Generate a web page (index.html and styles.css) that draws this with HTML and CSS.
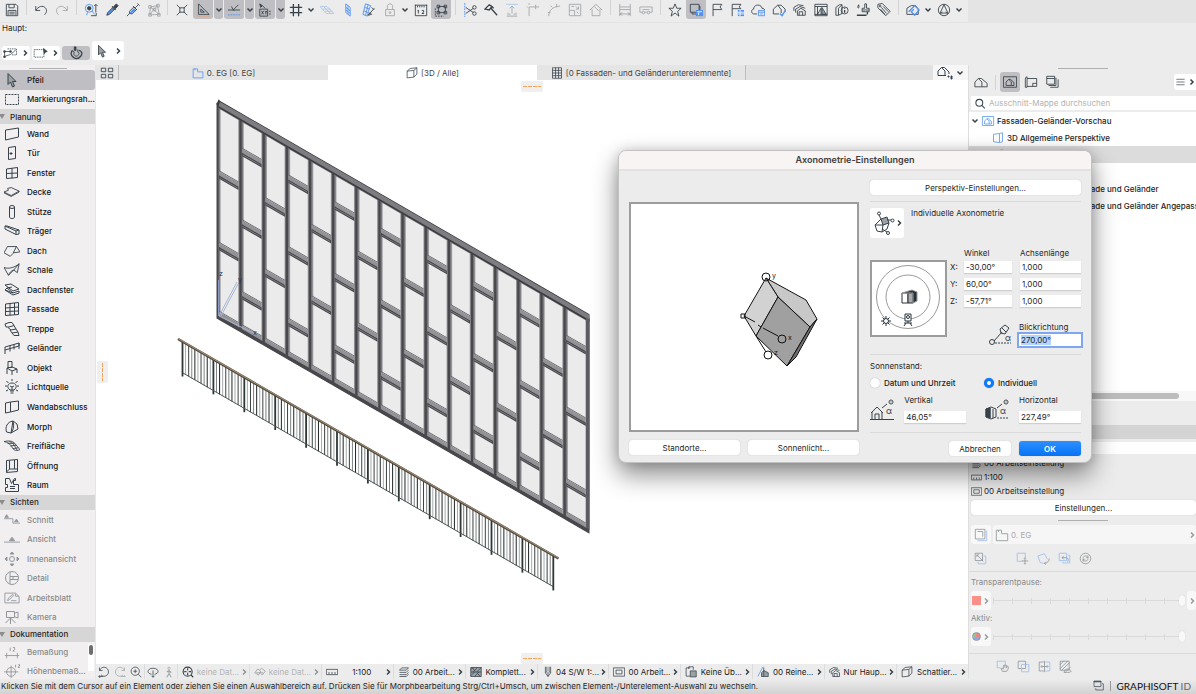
FILE: index.html
```html
<!DOCTYPE html>
<html lang="de">
<head>
  <meta charset="UTF-8" />
  <meta name="viewport" content="width=device-width, initial-scale=1.0"/>
  <title>Axonometrie-Einstellungen</title>
  <link rel="stylesheet" href="styles.css">
</head>
<body>

<!-- icon sprite, all on a 16px grid -->
<svg class="sprite" aria-hidden="true">
  <symbol id="chev" viewBox="0 0 8 8"><path class="bold" d="M1.5 2.5 4 5l2.500-2.500"/></symbol>
  <symbol id="next" viewBox="0 0 8 8"><path class="bold" d="M3 1.500 5.500 4 3 6.500"/></symbol>
  <symbol id="save" viewBox="0 0 16 16"><path d="M1.500 1.500h11l2 2v11h-13zM4.500 1.500v4h6v-4M3.500 14v-5.500h9V14M5 10.500h6M5 12.500h6"/></symbol>
  <symbol id="undo" viewBox="0 0 16 16"><path d="M2 3.500v5h5M2 8.500c3-5 8-6 11-3 2.500 3 1 6-1 8"/></symbol>
  <symbol id="redo" viewBox="0 0 16 16"><path d="M14 3.500v5H9M14 8.500c-3-5-8-6-11-3-2.500 3-1 6 1 8"/></symbol>
  <symbol id="find" viewBox="0 0 16 16"><circle class="blue" cx="6" cy="6" r="4.500"/><circle class="fill" cx="6" cy="6" r="2"/><path class="blue" d="M4 10.500 3 14M9 9l3 4"/><path d="M13.500 2v9M11.500 3.500l2-2 2 2M8 14.500h6v-3"/></symbol>
  <symbol id="pick" viewBox="0 0 16 16"><path class="bluefill" d="M2 14l1-3 5-5 2 2-5 5z"/><path d="M2 14l1-3 5-5 2 2-5 5z"/><path class="fill" d="M10 4l3-3 2 2-3 3.500z"/><path class="bold" d="M8 4l4 4"/></symbol>
  <symbol id="inject" viewBox="0 0 16 16"><path class="bluefill" d="M4 11l5-5 2 2-5 4z"/><path d="M1 15l3-3M4 9.500l5-5 3 3-5 5-3-.5zM10.500 5.500l4-4M13 .5l2.500 2.500M8 3.500l4.500 4.500"/></symbol>
  <symbol id="nodes" viewBox="0 0 16 16"><path d="M3 13.500l1-9 8-1.500 2 10zM4 4.500l10 8.500M12 3L3 13"/><path d="M2 3h3v3H2zM11 1.500h3v3h-3zM2 12h3v3H2zM12 12h3v3h-3zM7 6h3v3H7z"/></symbol>
  <symbol id="snap" viewBox="0 0 16 16"><path d="M2 2l4 4M14 2l-4 4M2 14l4-4M14 14l-4-4M5.500 5.500h5v5h-5z"/></symbol>
  <symbol id="triangle" viewBox="0 0 16 16"><path d="M3 1v12h12zM5.500 7v3.500h4z"/><path class="orange" d="M2 15h13M1.500 1v14"/></symbol>
  <symbol id="guide" viewBox="0 0 16 16"><path d="M1 8h14M7 8l6-6M5 4l3 5"/><path class="blue dash" d="M1 13.500h14"/></symbol>
  <symbol id="xy" viewBox="0 0 16 16"><path class="fill" d="M2 1l3 2-2 2z"/><path d="M2 7h9v8H2zM4 9l2.500 4M6.500 9L4 13M8 9l1 2 1-2M9 11v2M12.500 9.500h2M12.500 12.500h2M5 3l3 3"/></symbol>
  <symbol id="grid" viewBox="0 0 16 16"><path class="bold" d="M5 1v14M11 1v14M1 5h14M1 11h14"/></symbol>
  <symbol id="plane" viewBox="0 0 16 16"><path class="blue" d="M0 4h8l8 8H7zM3 7h9M4 4l8 8M5.500 9.500H14"/></symbol>
  <symbol id="vplane" viewBox="0 0 16 16"><path class="blue" d="M5.500 1l5 4v10l-5-4zM8 3v10M5.500 5l5 4M5.500 8l5 4"/></symbol>
  <symbol id="editplane" viewBox="0 0 16 16"><path class="blue" d="M4 1l6 2-2 4-2 8-5-2zM3 5l6 2M2 9l5 2M7 2L4 14"/><path d="M8 13l6-7M11 5l3 3M7 14l2-3 2 2z"/></symbol>
  <symbol id="lock" viewBox="0 0 16 16"><path d="M3 7.500h10v7H3zM5 7V4c0-4 6-4 6 0v3"/><circle cx="8" cy="11" r="1"/></symbol>
  <symbol id="ruler12" viewBox="0 0 16 16"><path d="M1.500 2v12.500h13V2M1 2.500h14M4 3v2M6.500 3v2M9 3v2M11.500 3v2M5 8v4M4 9l1-1M9 8.500h2v2L9 12h2.500"/></symbol>
  <symbol id="group" viewBox="0 0 16 16"><path d="M5 4h8v7H5z"/><path d="M3.500 2.500h3v3h-3zM11.500 2.500h3v3h-3zM3.500 9.500h3v3h-3zM11.500 9.500h3v3h-3z"/><path class="dash" d="M1.500 6v9H11"/></symbol>
  <symbol id="cut" viewBox="0 0 16 16"><path class="blue dash" d="M2 0v16"/><path d="M3 5l9 6M3 12l9-6"/><circle cx="13" cy="5" r="2"/><circle cx="13" cy="12" r="2"/></symbol>
  <symbol id="axe" viewBox="0 0 16 16"><path class="bold" d="M1 7l5-5 3 2-3 4zM8 6l7 8M8 3l3 3"/></symbol>
  <symbol id="raise" viewBox="0 0 16 16"><path class="blue" d="M1 1.500h14"/><path d="M8 12V4M5.500 6L8 3.500 10.500 6M2 15h12M3.500 14v-3M12.500 14v-3M5.500 14v-2M10.500 14v-2"/></symbol>
  <symbol id="corner" viewBox="0 0 16 16"><path d="M3.500 15V4.500H15M3.500 0v2M1 4.500h1M11 2v5"/></symbol>
  <symbol id="arc" viewBox="0 0 16 16"><path d="M2 15C2 8 7 4 15 3.500M1 11h3M11 1v4M6 5L4 3"/></symbol>
  <symbol id="resize" viewBox="0 0 16 16"><path d="M1.500 1.500h13v13h-13zM1.500 8.500h6v6M4 4h3M9 4l3 3M12 4v3H9M10 10l2 2"/></symbol>
  <symbol id="house" viewBox="0 0 16 16"><path d="M1 8l7-6.500L15 8M3.500 7v7.500h9V7M6 4l5 5"/></symbol>
  <symbol id="dim" viewBox="0 0 16 16"><path d="M2 1v14M14 1v14M2 4.500h12M2 7.500h12M2 12.500h12M5 11l-3 1.500L5 14M11 11l3 1.500L11 14"/></symbol>
  <symbol id="truck" viewBox="0 0 16 16"><path d="M4 10.500H1v-6h14v6h-3M6.500 10.500h3M4 7.500h8"/><circle cx="5" cy="11" r="1.500"/><circle cx="11" cy="11" r="1.500"/></symbol>
  <symbol id="star" viewBox="0 0 16 16"><path d="M8 1l2 5h5l-4 3.500 1.500 5.500L8 11.500 3.500 15 5 9.500 1 6h5z"/></symbol>
  <symbol id="stack" viewBox="0 0 16 16"><path d="M1.500 1.500h10v9h-10zM3.500 10.500v2h9v-9h-1"/><path class="bluefill" d="M8 8h8v7H8z"/><path class="white" d="M9 10h6M11 11v3"/></symbol>
  <symbol id="flag" viewBox="0 0 16 16"><path d="M3.500 15V1.500h10l-2 3 2 3h-10"/></symbol>
  <symbol id="flaglist" viewBox="0 0 16 16"><path d="M2.500 15V1.500h10l-2 3 2 2h-10"/><path class="bluefill" d="M9 8h7v7H9z"/><path class="white" d="M9 10.500h7M9 12.500h7M11.500 8v7"/></symbol>
  <symbol id="cloud" viewBox="0 0 16 16"><path d="M7 12.500H3C0 12 0 7 3 7c0-6 9-6 9.500-1 2 0 3 1 3 2"/><path class="blue" d="M8.500 8.500h7v6h-7zM8.500 10.500h7M10.500 12.500h3"/></symbol>
  <symbol id="housecheck" viewBox="0 0 16 16"><path d="M8 12.500H1.500V7l5-4.500 4 5v4M6.500 2.500h4L15 7v3"/><path class="blue bold" d="M9 12l2.500 2.500L15 9"/></symbol>
  <symbol id="houses" viewBox="0 0 16 16"><path d="M1 9V5l5-3 6 1M3 11V7l5-3 6 2M5 14V9l4-3 5 3v5zM7 14v-4h4v4"/></symbol>
  <symbol id="picture" viewBox="0 0 16 16"><path d="M1 1.500h14v13H1z"/><path class="soft" d="M9 13V5l5 8z"/><path d="M1 4h14M4 13l4-7M8 6v7M4 4v10M1 13h14"/></symbol>
  <symbol id="info" viewBox="0 0 16 16"><path d="M1 14V5l4-3h3v10l-4 2zM4 14V6l4-4"/><circle cx="11" cy="8.500" r="4"/><path class="bold" d="M11 8v3M11 5.500v1"/></symbol>
  <symbol id="brush" viewBox="0 0 16 16"><path d="M3 2c-3 5 2 5 0 0M10 1v5H7v4h8V6h-3V1zM7 8h8"/><path class="bold" d="M1 14h11M13 10v3"/></symbol>
  <symbol id="tag" viewBox="0 0 16 16"><path d="M1 1.500l5-1 9 9-5 5-9-9zM5 5l6 7M7 4l6 6M4 7l5 6"/><circle cx="3.500" cy="3.500" r="1"/></symbol>
  <symbol id="crane" viewBox="0 0 16 16"><path d="M1 6l5-3h5l3 4v6H1z"/><path class="blue bold" d="M3 10l7-7 5 5-5 6-4-4 3-3"/></symbol>
  <symbol id="mark" viewBox="0 0 16 16"><circle cx="8" cy="8" r="6.500"/><path d="M8 2l4.500 9.500h-9zM4 12l2-2M12 12l-2-2"/></symbol>
  <symbol id="arrow" viewBox="0 0 16 16"><path class="soft" d="M4 1.500l8 8H8.500l2 4.500-2 1-2-5-2.500 2.500z"/></symbol>
  <symbol id="marquee" viewBox="0 0 16 16"><path class="dash" d="M1.500 3.500h13v10h-13z"/></symbol>
  <symbol id="polyselect" viewBox="0 0 20 16"><path d="M2 13V6h8M2 12.500l8-2.500 7-6"/><path class="fill" d="M1 5h2v2H1zM1 12h2v2H1zM9 5h2v2H9z"/><path class="dash" d="M6 2.500h12v8h-6"/></symbol>
  <symbol id="marqarrow" viewBox="0 0 20 16"><path class="dash" d="M1.500 3.500h13v10h-13z"/><path class="fill" d="M14 2l5 4-3 1-1 2z"/></symbol>
  <symbol id="magnet" viewBox="0 0 16 16"><path class="bold" d="M4 5c-5 5 3 12 8 8 5-4 2-8-1-8"/><path d="M6 7c-2 3 2 6 4 4 2-1 2-4 0-4M3 5l3 2M10 4v3"/><path class="fill" d="M6 1h2v4H6z"/></symbol>
  <symbol id="wall" viewBox="0 0 16 16"><path d="M1.500 4l13-2v9l-13 3z"/></symbol>
  <symbol id="door" viewBox="0 0 16 16"><path d="M4.500 2.500l7-1v12l-7 1z"/><path class="fill" d="M6 8h2v1H6z"/></symbol>
  <symbol id="window" viewBox="0 0 16 16"><path d="M2.500 4l11-1.500v10l-11 1zM8 3v10.500M2.500 8.500l11-.5"/></symbol>
  <symbol id="slab" viewBox="0 0 18 16"><path d="M0 8l5-2-1-2 4-1 9 4-9 5zM0 8v1l8 4 9-5V7"/></symbol>
  <symbol id="column" viewBox="0 0 16 16"><ellipse cx="8" cy="3" rx="2.500" ry="1.500"/><path d="M5.500 3v10c0 2 5 2 5 0V3"/></symbol>
  <symbol id="beam" viewBox="0 0 16 16"><path d="M1 3v3l11 5.500V8zM1 3h2l12 4v4l-3 .5M12 8l3-1"/></symbol>
  <symbol id="roof" viewBox="0 0 18 16"><path d="M4 3h10l-4 8-3 3-7-4zM14 3l4 6-7 1"/></symbol>
  <symbol id="shell" viewBox="0 0 18 16"><path d="M0 5c4 2 11 1 17-4l-2 10-4-3-6 6zM11 8l6-7M5 14c1-3 3-5 6-6"/></symbol>
  <symbol id="skylight" viewBox="0 0 16 16"><path d="M1 3l6-1 8 5-6 2zM3 6l-2 2 8 5 6-2V9l-6 2-6-5 5-1M1 8l8 3"/></symbol>
  <symbol id="curtain" viewBox="0 0 16 16"><path d="M1.500 3l13-1.500v12l-13 1zM6 2.500v12M10.500 2v12M1.500 7l13-1M1.500 10.500l13-.5"/></symbol>
  <symbol id="stair" viewBox="0 0 16 16"><path d="M1 3l4-1.500h3l2 3-5 1.500-3 0zM4 6.500L7 9l5-1-2-3.500M6 9l2 3 6-1-2-3M8 12l2 2.500h5L14 11"/></symbol>
  <symbol id="rail" viewBox="0 0 16 16"><path d="M1 7l14-4v3M1 7v7M1 10l14-4M6 5.500v6M15 3v6M10 4.500v5"/></symbol>
  <symbol id="chair" viewBox="0 0 16 16"><path d="M4 1.500h4v6H4zM3 8l5-1 5 2-5 2zM3 8v6M8 11v4M13 9v4"/></symbol>
  <symbol id="bulb" viewBox="0 0 16 16"><path d="M6 11c-4-3-2-7 2-7s6 4 2 7zM6 12h4M6.500 14h3M8 0v2M1 7h2M13 7h2M2.500 2l2 2M13.500 2l-2 2M2 12l2-1M14 12l-2-1M6 7l2 1 2-1M8 8v3"/></symbol>
  <symbol id="wallend" viewBox="0 0 16 16"><path d="M1.500 4l5-1v10l-5 1zM6.500 3l8-1v9l-8 2"/></symbol>
  <symbol id="morph" viewBox="0 0 16 16"><path d="M9 2C3 3 1 8 2.500 13L7 14zM9 2l4 3 1 5-7 4M9 2c1 4 1 8-2 12"/></symbol>
  <symbol id="mesh" viewBox="0 0 18 16"><path d="M0 3c5-1 8-1 11 1l7 8c-4 2-6 1-8-1C7 5 4 4 0 3zM6 3c4 1 6 5 9 10M7 8l7-1M10 11l6-1M4 5l8 0"/></symbol>
  <symbol id="opening" viewBox="0 0 16 16"><path d="M2.500 2.500l11-1v12l-11 1zM5.500 2.500v8.500H13M5.500 11l-3 3M10.500 2v9"/></symbol>
  <symbol id="zone" viewBox="0 0 16 16"><path d="M1.500 1.500h4l2 5 3-5h1v2h-2v4h5v7h-13v-4h2v-3h-2zM6 9.500h5M6 11.500h5"/></symbol>
  <symbol id="section" viewBox="0 0 18 16"><path d="M0 6.500h10v5h8"/><path class="fill" d="M1 5l2-3 2 3zM12 10l2-3 2 3z"/></symbol>
  <symbol id="elev" viewBox="0 0 18 16"><path d="M0 11.500h18"/><path class="fill" d="M6 10l3-4 3 4z"/></symbol>
  <symbol id="interior" viewBox="0 0 16 16"><circle cx="8" cy="8" r="2.500"/><path class="fill" d="M8 1l2 2H6zM8 15l2-2H6zM1 8l2-2v4zM15 8l-2-2v4z"/></symbol>
  <symbol id="detail" viewBox="0 0 16 16"><circle cx="8" cy="8" r="6.500"/><path d="M6 2v12M6 6.500h8M6 9.500h8M9 6v4"/></symbol>
  <symbol id="sheet" viewBox="0 0 18 16"><path d="M1 2.500h12l4 4v7H1zM4 11l1-3 5-4 1 1-5 5zM8 11h6M13 3v3h4"/></symbol>
  <symbol id="camera" viewBox="0 0 16 16"><path d="M2.500 2.500h8v6h-8zM11 4l3-1v6l-3-1M6.500 9v6M6.500 9l-5 5M6.500 9l5 5"/></symbol>
  <symbol id="dimension" viewBox="0 0 18 16"><path d="M1 12h16M3 9v6M15 9v6M7 3v4M10 3h2v2l-2 2h2"/></symbol>
  <symbol id="level" viewBox="0 0 18 16"><circle cx="8" cy="9" r="5"/><path d="M0 9h16M8 2v14M13 1v3M16 1h2l-2 3h2"/></symbol>
  <symbol id="tiles" viewBox="0 0 16 16"><path d="M1.500 2.500h5v4h-5zM9.500 2.500h5v4h-5zM1.500 9.500h5v4h-5zM9.500 9.500h5v4h-5z"/></symbol>
  <symbol id="plan" viewBox="0 0 16 16"><path d="M1.500 2.500h6v4h7v8h-13zM4 2.500v2"/></symbol>
  <symbol id="box" viewBox="0 0 16 16"><path d="M1.500 5.500l9-1v9l-9 1zM1.500 5.500l4-3.500 9-1-4 3.500M14.500 1v8.500l-4 4"/></symbol>
  <symbol id="table" viewBox="0 0 16 16"><path d="M2 1h12v14H2zM2 4.500h12M2 8h12M2 11.500h12M6 1v14M10 1v14"/></symbol>
  <symbol id="project" viewBox="0 0 16 16"><path d="M1 13.500V8l4-4 4 4v5.500zM5 4h3.500L15 9.500v4H9"/></symbol>
  <symbol id="projtab" viewBox="0 0 16 16"><path d="M9 10.500H1V6l3.500-3.500L8 6v4.500M4.500 2.500h3L12 7v2"/><path class="fill" d="M11 11h1v1h-1zM14 11h1v3h-1z"/></symbol>
  <symbol id="viewmap" viewBox="0 0 16 16"><path d="M.5 2h15v12H.5z"/><path d="M3.500 12V8l3-3 3 3v4zM6.500 5h2l4 3.500V12h-3"/></symbol>
  <symbol id="layout" viewBox="0 0 16 16"><path d="M3.500 2v12h-2v-9c0-3 2-3 2-3M3.500 4h11v9h-11M10 13V9.500h4.500"/></symbol>
  <symbol id="pub" viewBox="0 0 16 16"><path d="M2 1.500h9v9H2zM4 12h8.500V3M6 14h9V5M2 4h9"/></symbol>
  <symbol id="menu" viewBox="0 0 16 16"><path d="M2 4h12M2 8h12M2 12h12"/></symbol>
  <symbol id="search" viewBox="0 0 16 16"><circle class="bold" cx="7" cy="7" r="5"/><path class="bold" d="M11 11l4 4"/></symbol>
  <symbol id="persp" viewBox="0 0 16 16"><path class="blue" d="M2 3l8-1v12l-8-1zM10 2l4-1v12l-4 1"/></symbol>
  <symbol id="layers" viewBox="0 0 16 16"><path d="M5 2.500h9l-3 3H2zM2 8.500h9l3-3M2 11.500h9l3-3M2 14h9l3-3"/></symbol>
  <symbol id="scale" viewBox="0 0 16 16"><path d="M.5 4.500h15v7H.5zM4 11V8M8 11V8M12 11V8"/></symbol>
  <symbol id="frame" viewBox="0 0 16 16"><path d="M.5 2.500h15v11H.5zM4 5.500h8v5H4z"/></symbol>
  <symbol id="trace" viewBox="0 0 16 16"><path class="blue" d="M4 14.500h10.500V3"/><path d="M1.500 1.500h11v11h-11zM4 4h6v6"/></symbol>
  <symbol id="swap" viewBox="0 0 16 16"><path d="M1.500 1.500h9v9h-9zM3.500 3.500l8 8M3.500 6V3.500H6"/><path class="blue" d="M12 5h2.500v9.500H5V12"/></symbol>
  <symbol id="move" viewBox="0 0 16 16"><path class="blue" d="M8 11.500H1.500v-10h10V7"/><path d="M11 7v8M7 11h8M10 8l1-1 1 1M10 14l1 1 1-1"/></symbol>
  <symbol id="rotate" viewBox="0 0 16 16"><path class="blue" d="M8 14l-4-1-3-8 8-3 4 7"/><path d="M15 8c0 4-3 6-6 6M11 12l-2 2 2 1.500"/></symbol>
  <symbol id="back" viewBox="0 0 16 16"><path class="blue" d="M1.500 1.500h9v9h-9zM12 4h2.500v9.500H6V12"/><path d="M5 7h5c3 0 3 3 2 5M7 5L5 7l2 2"/></symbol>
  <symbol id="refresh" viewBox="0 0 16 16"><circle cx="8" cy="8" r="6.500"/><path d="M5 8c0-4 5-4 6-1M11 8c0 4-5 4-6 1M11 4v3H9M5 12V9h2"/></symbol>
  <symbol id="hand" viewBox="0 0 16 16"><path class="blue" d="M5 9.500H1.500v-8h10V6"/><path d="M6 10l2 4h5l2-3V8l-2-1-2-1-2 1v4zM11 6v4M13 7v3"/></symbol>
  <symbol id="overlap" viewBox="0 0 16 16"><path d="M1.500 1.500h9v9h-9z"/><path class="blue" d="M5.500 5.500h9v9h-9z"/></symbol>
  <symbol id="split" viewBox="0 0 16 16"><path class="blue" d="M9 2.500h5.500v11H9"/><path d="M7 2.500H1.500v11H7M8 1v14M4 8h8M5 6.500L3.500 8 5 9.500M11 6.500L12.500 8 11 9.500"/></symbol>
  <symbol id="hatch" viewBox="0 0 16 16"><path d="M1.500 1.500h11v11h-11zM1 6l5-5M1 11L11 1M3 13L13 3M6 15c2-5 6-5 9-1-3 2-6 2-9 1zM7 16l7-7"/></symbol>
  <symbol id="zoomin" viewBox="0 0 16 16"><circle cx="7" cy="7" r="5.500"/><path d="M7 4.500v5M4.500 7h5M11 11l4 4"/></symbol>
  <symbol id="zoomprev" viewBox="0 0 16 16"><path d="M4 12c5 4 10 0 10-4 0-7-9-9-12-2M2 2v4h4M1 14h6M1 14l2-2M1 14l2 2"/></symbol>
  <symbol id="zoomnext" viewBox="0 0 16 16"><path d="M12 12c-5 4-10 0-10-4 0-7 9-9 12-2M14 2v4h-4M15 14H9M15 14l-2-2"/></symbol>
  <symbol id="orbit" viewBox="0 0 16 16"><path d="M6 11C-1 10 0 3 8 3s9 7 2 8M8 6v9M6 13l2 2 2-2"/></symbol>
  <symbol id="walk" viewBox="0 0 16 16"><circle cx="8" cy="3" r="1.500"/><path class="bold" d="M8 5v5l-3 5M8 10l3 5M5 8l3-2 3 3"/></symbol>
  <symbol id="fit" viewBox="0 0 16 16"><circle class="bold" cx="7.500" cy="7.500" r="6"/><path class="bold" d="M12 12l3 3M7.500 3v3M7.500 9v3M3 7.500h3M9 7.500h3"/></symbol>
  <symbol id="orient" viewBox="0 0 16 16"><path d="M1 9l4-5 4 3-3 5zM8 5l2-2 5 4-4 5-2-2M3 9h9"/></symbol>
  <symbol id="pattern" viewBox="0 0 16 16"><path class="soft" d="M1 2h14v12H1z"/><path d="M1 8h14M1 5l3-3M4 8l6-6M9 8l6-6M1 13l5-5M6 14l6-6M3 2l4 5M9 9l5 5"/></symbol>
  <symbol id="pen" viewBox="0 0 16 16"><path d="M4.500 1v8L8 14l3.500-5V1M8 8v6M4.500 9l2-1.500V1M11.500 9l-2-1.500V1"/></symbol>
  <symbol id="override" viewBox="0 0 16 16"><path d="M7 2.500H1.500v11H7"/><path class="soft" d="M7 6.500h8v8H7z"/><path d="M5 4V1h6v4"/></symbol>
  <symbol id="reno" viewBox="0 0 16 16"><path class="blue" d="M8 1L1 14"/><path class="soft" d="M6 14V9l3-3 6 3v5z"/><path d="M9 2v12"/></symbol>
  <symbol id="two" viewBox="0 0 16 16"><path d="M1.500 1.500h10v8h-10z"/><path class="bold" d="M1 2.500h11"/><path d="M4 12v2.500h11v-9h-2"/></symbol>
  <symbol id="axo" viewBox="0 0 24 24"><path class="soft" d="M10 8l6-2 2 6-6 2z"/><path d="M10 8l-6 6 2 6 5 1 5-3 2-6M12 14l-1 7M4 14l8 0M10 8l-2-4M16 9h4M11 18l5 3"/><circle cx="8" cy="2.500" r="1.500"/><circle cx="21.500" cy="9.500" r="1.500"/><circle cx="17" cy="22" r="1.500"/></symbol>
</svg>

<div class="app">
  <header class="top">
    <div class="toolbar">
      <button><svg><use href="#save"/></svg></button><i class="sep"></i>
      <button><svg><use href="#undo"/></svg></button>
      <button disabled><svg><use href="#redo"/></svg></button><i class="sep"></i>
      <button><svg><use href="#find"/></svg></button>
      <button><svg><use href="#pick"/></svg></button>
      <button><svg><use href="#inject"/></svg></button>
      <button disabled><svg><use href="#nodes"/></svg></button><i class="sep"></i>
      <button><svg><use href="#snap"/></svg></button>
      <button class="on"><svg><use href="#triangle"/></svg></button>
      <button class="drop on"><svg><use href="#chev"/></svg></button>
      <button class="on"><svg><use href="#guide"/></svg></button>
      <button class="drop on"><svg><use href="#chev"/></svg></button>
      <button class="on"><svg><use href="#xy"/></svg></button>
      <button class="drop on"><svg><use href="#chev"/></svg></button>
      <button><svg><use href="#grid"/></svg></button>
      <button class="drop"><svg><use href="#chev"/></svg></button>
      <button disabled><svg><use href="#plane"/></svg></button>
      <button><svg><use href="#vplane"/></svg></button>
      <button><svg><use href="#editplane"/></svg></button>
      <button disabled><svg><use href="#lock"/></svg></button>
      <button class="drop"><svg><use href="#chev"/></svg></button>
      <button><svg><use href="#ruler12"/></svg></button>
      <button class="on"><svg><use href="#group"/></svg></button><i class="sep"></i>
      <button><svg><use href="#cut"/></svg></button>
      <button><svg><use href="#axe"/></svg></button>
      <button disabled><svg><use href="#raise"/></svg></button>
      <button disabled><svg><use href="#corner"/></svg></button>
      <button disabled><svg><use href="#arc"/></svg></button>
      <button disabled><svg><use href="#resize"/></svg></button>
      <button disabled><svg><use href="#house"/></svg></button><i class="sep"></i>
      <button disabled><svg><use href="#dim"/></svg></button>
      <button disabled><svg><use href="#truck"/></svg></button><i class="sep"></i>
      <button><svg><use href="#star"/></svg></button>
      <button class="on"><svg><use href="#stack"/></svg></button>
      <button><svg><use href="#flag"/></svg></button>
      <button><svg><use href="#flaglist"/></svg></button>
      <button><svg><use href="#cloud"/></svg></button>
      <button><svg><use href="#housecheck"/></svg></button>
      <button><svg><use href="#houses"/></svg></button>
      <button><svg><use href="#picture"/></svg></button>
      <button><svg><use href="#info"/></svg></button>
      <button><svg><use href="#brush"/></svg></button>
      <button><svg><use href="#tag"/></svg></button><i class="sep"></i>
      <button><svg><use href="#crane"/></svg></button>
      <button class="drop"><svg><use href="#chev"/></svg></button>
      <button><svg><use href="#mark"/></svg></button>
      <button class="drop"><svg><use href="#chev"/></svg></button>
    </div>
    <div class="top-rest"></div>
  </header>

  <div class="infobox">
    <div>Haupt:</div>
    <div class="infobox-row">
      <button class="pill"><svg class="wide"><use href="#polyselect"/></svg><svg class="tiny"><use href="#next"/></svg></button>
      <button class="pill"><svg class="wide"><use href="#marqarrow"/></svg><svg class="tiny"><use href="#next"/></svg></button>
      <button class="pill on"><svg><use href="#magnet"/></svg></button>
      <button class="pill tall"><svg><use href="#arrow"/></svg><svg class="tiny"><use href="#next"/></svg></button>
    </div>
  </div>

  <div class="main">
    <nav class="toolbox">
      <div class="grip"></div>
      <button class="on"><svg><use href="#arrow"/></svg>Pfeil</button>
      <button><svg><use href="#marquee"/></svg>Markierungsrah...</button>
      <h3>Planung</h3>
      <button><svg><use href="#wall"/></svg>Wand</button>
      <button><svg><use href="#door"/></svg>Tür</button>
      <button><svg><use href="#window"/></svg>Fenster</button>
      <button><svg><use href="#slab"/></svg>Decke</button>
      <button><svg><use href="#column"/></svg>Stütze</button>
      <button><svg><use href="#beam"/></svg>Träger</button>
      <button><svg><use href="#roof"/></svg>Dach</button>
      <button><svg><use href="#shell"/></svg>Schale</button>
      <button><svg><use href="#skylight"/></svg>Dachfenster</button>
      <button><svg><use href="#curtain"/></svg>Fassade</button>
      <button><svg><use href="#stair"/></svg>Treppe</button>
      <button><svg><use href="#rail"/></svg>Geländer</button>
      <button><svg><use href="#chair"/></svg>Objekt</button>
      <button><svg><use href="#bulb"/></svg>Lichtquelle</button>
      <button><svg><use href="#wallend"/></svg>Wandabschluss</button>
      <button><svg><use href="#morph"/></svg>Morph</button>
      <button><svg><use href="#mesh"/></svg>Freifläche</button>
      <button><svg><use href="#opening"/></svg>Öffnung</button>
      <button><svg><use href="#zone"/></svg>Raum</button>
      <h3>Sichten</h3>
      <button disabled><svg><use href="#section"/></svg>Schnitt</button>
      <button disabled><svg><use href="#elev"/></svg>Ansicht</button>
      <button disabled><svg><use href="#interior"/></svg>Innenansicht</button>
      <button disabled><svg><use href="#detail"/></svg>Detail</button>
      <button disabled><svg><use href="#sheet"/></svg>Arbeitsblatt</button>
      <button disabled><svg><use href="#camera"/></svg>Kamera</button>
      <h3>Dokumentation</h3>
      <button disabled><svg><use href="#dimension"/></svg>Bemaßung</button>
      <button disabled><svg><use href="#level"/></svg>Höhenbemaß...</button>
      <div class="toolbox-scroll"></div>
    </nav>

    <section class="work">
      <div class="tabs">
        <button class="overview"><svg><use href="#tiles"/></svg></button>
        <button class="tab"><svg class="blueicon"><use href="#plan"/></svg>0. EG [0. EG]</button>
        <button class="tab active"><svg><use href="#box"/></svg>[3D / Alle]</button>
        <button class="tab last"><svg><use href="#table"/></svg>[0 Fassaden- und Geländerunterelemnente]</button>
        <div class="tabs-fill"></div>
        <button class="tabs-more"><svg><use href="#projtab"/></svg><svg class="tiny"><use href="#chev"/></svg></button>
      </div>
      <div class="canvas">
        <svg class="model" id="model" width="872" height="585" viewBox="96 80 872 585"></svg>
        <div class="handle handle-top"></div>
        <div class="handle handle-left"></div>
        <div class="handle handle-bottom"></div>
      </div>
      <div class="quick">
        <div class="quick-nav">
          <button><svg><use href="#zoomprev"/></svg></button>
          <button disabled><svg><use href="#zoomnext"/></svg></button>
          <button><svg><use href="#zoomin"/></svg></button>
        </div>
        <div class="quick-nav">
          <button><svg><use href="#orbit"/></svg></button>
          <button disabled><svg><use href="#walk"/></svg></button>
        </div>
        <button class="option off"><svg class="dark"><use href="#fit"/></svg><span>keine Dat...</span><svg class="tiny"><use href="#next"/></svg></button>
        <button class="option off"><svg><use href="#orient"/></svg><span>keine Dat...</span><svg class="tiny"><use href="#next"/></svg></button>
        <button class="option"><svg><use href="#scale"/></svg><span>1:100</span><svg class="tiny"><use href="#next"/></svg></button>
        <button class="option"><svg><use href="#layers"/></svg><span>00 Arbeit...</span><svg class="tiny"><use href="#next"/></svg></button>
        <button class="option"><svg><use href="#pattern"/></svg><span>Komplett...</span><svg class="tiny"><use href="#next"/></svg></button>
        <button class="option"><svg><use href="#pen"/></svg><span>04 S/W 1:...</span><svg class="tiny"><use href="#next"/></svg></button>
        <button class="option"><svg><use href="#frame"/></svg><span>00 Arbeit...</span><svg class="tiny"><use href="#next"/></svg></button>
        <button class="option"><svg><use href="#override"/></svg><span>Keine Üb...</span><svg class="tiny"><use href="#next"/></svg></button>
        <button class="option"><svg><use href="#reno"/></svg><span>00 Reine...</span><svg class="tiny"><use href="#next"/></svg></button>
        <button class="option"><svg><use href="#houses"/></svg><span>Nur Haup...</span><svg class="tiny"><use href="#next"/></svg></button>
        <button class="option"><svg><use href="#box"/></svg><span>Schattier...</span><svg class="tiny"><use href="#next"/></svg></button>
      </div>
    </section>

    <aside class="navigator">
      <div class="grip wide-grip"></div>
      <div class="nav-icons">
        <button><svg><use href="#project"/></svg></button><i class="sep"></i>
        <button class="on"><svg><use href="#viewmap"/></svg></button>
        <button><svg><use href="#layout"/></svg></button>
        <button><svg><use href="#pub"/></svg></button>
        <button class="nav-menu"><svg><use href="#menu"/></svg><svg class="tiny"><use href="#next"/></svg></button>
      </div>
      <label class="search"><svg><use href="#search"/></svg><input type="text" placeholder="Ausschnitt-Mappe durchsuchen" aria-label="Ausschnitt-Mappe durchsuchen"></label>
      <ul class="tree">
        <li><svg class="tiny"><use href="#chev"/></svg><svg class="blueicon"><use href="#viewmap"/></svg>Fassaden-Geländer-Vorschau</li>
        <li class="child"><svg><use href="#persp"/></svg>3D Allgemeine Perspektive</li>
        <li class="child selected"><svg><use href="#persp"/></svg></li>
        <li></li>
        <li class="deep">Fassade und Geländer</li>
        <li class="deep">Fassade und Geländer Angepasst</li>
      </ul>
      <div class="hscroll"><div></div></div>
      <div class="props">
        <h4></h4>
        <div class="props-name"></div>
        <p><svg><use href="#layers"/></svg>00 Arbeitseinstellung</p>
        <p><svg><use href="#scale"/></svg>1:100</p>
        <p><svg><use href="#frame"/></svg>00 Arbeitseinstellung</p>
        <button class="push">Einstellungen...</button>
      </div>
      <div class="grip wide-grip"></div>
      <div class="trace">
        <div class="trace-row">
          <button class="chip"><svg><use href="#trace"/></svg></button>
          <button class="trace-ref"><svg><use href="#plan"/></svg><span>0. EG</span><svg class="tiny"><use href="#next"/></svg></button>
        </div>
        <div class="trace-icons">
          <svg class="first"><use href="#swap"/></svg>
          <svg><use href="#move"/></svg>
          <svg><use href="#rotate"/></svg>
          <svg><use href="#back"/></svg>
          <svg><use href="#refresh"/></svg>
        </div>
        <label for="ref">Transparentpause:</label>
        <div class="trace-row">
          <button class="chip"><span class="swatch"></span><svg class="tiny"><use href="#next"/></svg></button>
          <input type="range" id="ref" value="100" disabled>
          <button class="chip narrow"><svg class="tiny"><use href="#next"/></svg></button>
        </div>
        <label for="act">Aktiv:</label>
        <div class="trace-row">
          <button class="chip"><span class="swatch wheel"></span><svg class="tiny"><use href="#next"/></svg></button>
          <input type="range" id="act" value="100" disabled>
          <div class="narrow"></div>
        </div>
        <div class="trace-icons lower">
          <svg><use href="#hand"/></svg>
          <svg><use href="#overlap"/></svg>
          <svg><use href="#split"/></svg>
          <svg><use href="#hatch"/></svg>
        </div>
      </div>
    </aside>
  </div>

  <footer class="status">
    <span>Klicken Sie mit dem Cursor auf ein Element oder ziehen Sie einen Auswahlbereich auf. Drücken Sie für Morphbearbeitung Strg/Ctrl+Umsch, um zwischen Element-/Unterelement-Auswahl zu wechseln.</span>
    <div class="brand"><svg><use href="#two"/></svg><i class="sep"></i><div><b>GRAPHISOFT</b> ID</div></div>
  </footer>
</div>

<form class="dialog" role="dialog" aria-labelledby="dlgTitle" onsubmit="return false">
  <h2 id="dlgTitle">Axonometrie-Einstellungen</h2>
  <div class="dialog-body">
    <div class="dialog-left">
      <svg class="preview" viewBox="0 0 226 226">
        <g transform="translate(-2 -2)">
          <path d="M137 76l40 22 11 19-7 8-32-30z" fill="#c8c8c8"/>
          <path d="M137 76l12 19-22 39-12-20z" fill="#d2d2d2"/>
          <path d="M149 95l32 30-23 39-31-30z" fill="#a0a0a0"/>
          <path d="M181 125l7-8-21 38-9 9z" fill="#707070"/>
          <path d="M115 114l11 6M129 123l3 2M134 126l15 8M127 134l10 16" fill="none"/>
          <circle cx="137" cy="75" r="4" fill="none"/>
          <circle cx="153" cy="137" r="4" fill="none"/>
          <circle cx="139" cy="153" r="4" fill="none"/>
          <path d="M112 112h4v4h-4z" fill="none"/>
          <text x="143" y="76">y</text><text x="159" y="138">x</text><text x="145" y="153">z</text>
        </g>
      </svg>
      <div class="pair">
        <button class="push">Standorte...</button>
        <button class="push">Sonnenlicht...</button>
      </div>
    </div>

    <div class="dialog-right">
      <button class="push">Perspektiv-Einstellungen...</button>
      <hr>
      <div class="axo-type">
        <button class="axo-btn"><svg><use href="#axo"/></svg><svg class="tiny"><use href="#next"/></svg></button>
        <span>Individuelle Axonometrie</span>
      </div>
      <div class="axo-grid">
        <svg class="compass" viewBox="0 0 73 73">
          <circle cx="36" cy="35" r="31.500"/><circle cx="36" cy="35" r="22"/>
          <path d="M30 31h6v10h-6z" fill="#fff" stroke="#26323a"/><path d="M36 31h5v10h-5z" fill="#aaa" stroke="#26323a"/>
          <path d="M41 31l-11 0 10-3 5 2v9l-4 2z" fill="#26323a"/>
          <g stroke="#26323a"><circle cx="14" cy="59" r="2.500" fill="#fff"/><path d="M14 54v2M14 62v2M9 59h2M17 59h2M10.500 55.500l2 2M17.500 55.500l-2 2M10.500 62.500l2-2M17.500 62.500l-2-2"/>
          <path d="M33 52h6v7h-6z" fill="#fff"/><circle cx="36" cy="55" r="1.500"/><path d="M32 61h8M34 61l-2 3M38 61l2 3M36 59v2"/></g>
        </svg>
        <table class="angles">
          <thead><tr><th></th><th>Winkel</th><th>Achsenlänge</th></tr></thead>
          <tbody>
            <tr><th>X:</th><td><input aria-label="Winkel X" value="-30,00°"></td><td><input aria-label="Achsenlänge X" value="1,000"></td></tr>
            <tr><th>Y:</th><td><input aria-label="Winkel Y" value="60,00°"></td><td><input aria-label="Achsenlänge Y" value="1,000"></td></tr>
            <tr><th>Z:</th><td><input aria-label="Winkel Z" value="-57,71°"></td><td><input aria-label="Achsenlänge Z" value="1,000"></td></tr>
          </tbody>
        </table>
      </div>
      <div class="field-row view-dir">
        <svg class="angle-icon" viewBox="0 0 24 22"><path d="M5 17l8-9"/><circle cx="3" cy="18" r="2.500"/><path d="M11 5l5-4 4 3-4 6-4-1zM13 4l4 4"/><path class="dash" d="M6 19h16"/><text x="16" y="17">α</text></svg>
        <div class="field"><label for="dir">Blickrichtung</label><input id="dir" value="270,00°"></div>
      </div>
      <hr>
      <p class="sun-label">Sonnenstand:</p>
      <div class="radios">
        <label><input type="radio" name="sun">Datum und Uhrzeit</label>
        <label><input type="radio" name="sun" checked>Individuell</label>
      </div>
      <div class="sun-fields">
        <svg class="angle-icon" viewBox="0 0 24 22"><path d="M0 20.500h24M2 20v-7l5-5 5 5v7M1 14l6-6 6 6M5 20v-5h4v5M12 9l5-4"/><g class="thin"><circle cx="21" cy="3" r="1.500"/><path d="M21 0v1M21 5v1M18 3h1M23 3h1M19 1l1 1M23 1l-1 1M19 5l1-1M23 5l-1-1"/></g><text x="16" y="15">α</text></svg>
        <div class="field"><label for="vert">Vertikal</label><input id="vert" value="46,05°"></div>
        <svg class="angle-icon" viewBox="0 0 24 22"><path class="fill" d="M1 10l4-1v10l-4-1z"/><path d="M1 10l5-2 5 2v8l-5 2-5-2zM5 9v10M8 10v9M12 9l5-4"/><g class="thin"><circle cx="21" cy="3" r="1.500"/><path d="M21 0v1M21 5v1M18 3h1M23 3h1M19 1l1 1M23 1l-1 1M19 5l1-1M23 5l-1-1"/></g><path class="dash" d="M12 19h12"/><text x="15" y="15">α</text></svg>
        <div class="field"><label for="horiz">Horizontal</label><input id="horiz" value="227,49°"></div>
      </div>
      <hr>
      <div class="dialog-actions">
        <button class="push">Abbrechen</button>
        <button class="push primary">OK</button>
      </div>
    </div>
  </div>
</form>

<script src="script.js"></script>
</body>
</html>
```
FILE: styles.css
```css
:root {
  --chrome: #ececec;
  --tools: #f1eff0;
  --pressed: #bfbfc3;
  --line: #dadada;
  --ink: #37424a;
  --text: #262626;
  --blue: #4f90f0;
}

* {
  box-sizing: border-box;
}

body {
  margin: 0;
  font-family: Inter, "Liberation Sans", sans-serif;
  font-size: 8px;
  line-height: 10px;
  color: var(--text);
  background: var(--chrome);
  overflow: hidden;
}

button, input {
  font: inherit;
  color: inherit;
  border: 0;
  padding: 0;
  margin: 0;
  background: none;
}

button {
  display: flex;
  align-items: center;
  justify-content: center;
  white-space: nowrap;
}

h2, h3, h4, p, ul {
  margin: 0;
  padding: 0;
  font-size: 8px;
}

svg {
  width: 14px;
  height: 14px;
  flex: none;
  display: block;
  fill: none;
  stroke: var(--ink);
  stroke-width: 1;
}

svg.tiny {
  width: 8px;
  height: 8px;
}

.sprite {
  position: absolute;
  width: 0;
  height: 0;
}

.bold { stroke-width: 1.5; }
.thin { stroke-width: 0.7; }
.fill { fill: var(--ink); }
.soft { fill: #9aa0a4; }
.blue { stroke: var(--blue); }
.bluefill { stroke: none; fill: var(--blue); }
.orange { stroke: #f09a5c; stroke-dasharray: 2 1; }
.white { stroke: #fff; }
.dash { stroke-dasharray: 2 1; }
.blueicon { stroke: var(--blue); }

.sep {
  width: 7px;
  height: 15px;
  border-left: 1px solid #d4d4d4;
  margin-left: 3px;
  margin-right: -3px;
}

.grip {
  width: 38px;
  height: 1px;
  margin: 3px auto 1px;
  background: #b0b0b0;
  flex: none;
}

.wide-grip {
  width: 50px;
}

.app {
  display: flex;
  flex-direction: column;
  height: 100vh;
}

/* toolbar */
.top {
  display: flex;
  border-bottom: 1px solid #e4e4e4;
}

.toolbar {
  flex: 1;
  display: flex;
  justify-content: space-between;
  padding: 0 4px 3px 2px;
}

.toolbar button {
  width: 20px;
  height: 19px;
  border-radius: 0 0 3px 3px;
}

.toolbar .drop {
  width: 9px;
}

.toolbar .drop svg {
  width: 8px;
  height: 8px;
}

.toolbar .on,
.nav-icons .on,
.infobox .on {
  background: var(--pressed);
}

.toolbar button:disabled,
.quick button:disabled {
  opacity: 0.4;
}

.top-rest {
  width: 228px;
  background: #e4e4e4;
}

.infobox {
  padding: 0 2px 5px;
}

.infobox-row {
  display: flex;
  align-items: flex-end;
  gap: 2px;
  margin-top: 8px;
}

.pill {
  width: 28px;
  height: 14px;
  gap: 3px;
  border-radius: 3px;
  background: #fff;
}

.pill svg.wide {
  width: 15px;
  height: 12px;
}

.pill.tall {
  width: 32px;
  height: 19px;
  gap: 5px;
}

.main {
  flex: 1;
  min-height: 0;
  display: flex;
}

/* toolbox */
.toolbox {
  position: relative;
  width: 96px;
  flex: none;
  display: flex;
  flex-direction: column;
  margin-bottom: -2px;
  background: var(--tools);
  border-right: 1px solid #e6e6e6;
  overflow: hidden;
}

.toolbox button {
  flex: 1;
  min-height: 0;
  justify-content: flex-start;
  gap: 7px;
  padding-left: 4px;
  font-weight: 500;
  color: #161616;
}

.toolbox button svg {
  width: 16px;
  height: 16px;
}

.toolbox .on {
  background: var(--pressed);
  border-radius: 0 3px 3px 0;
}

.toolbox button:disabled {
  color: #8a8a8a;
}

.toolbox button:disabled svg {
  opacity: 0.5;
}

.toolbox h3 {
  height: 15px;
  flex: none;
  display: flex;
  align-items: center;
  gap: 5px;
  background: #d6d6d6;
  font-weight: 500;
}

.toolbox h3::before {
  content: "";
  border: 3px solid transparent;
  border-top: 5px solid #8c8c8c;
  border-bottom: 0;
  margin-left: -1px;
}

.toolbox-scroll {
  position: absolute;
  right: 1px;
  bottom: 10px;
  width: 6px;
  height: 27px;
  background: #fff;
}

.toolbox-scroll::before {
  content: "";
  display: block;
  width: 4px;
  height: 10px;
  margin: 1px;
  border-radius: 2px;
  background: #6e6e6e;
}

/* 3D window */
.work {
  flex: 1;
  min-width: 0;
  display: flex;
  flex-direction: column;
}

.tabs {
  display: flex;
  height: 15px;
  background: #e5e5e5;
}

.overview {
  width: 23px;
  border-right: 1px solid #bdbdbd;
}

.tab {
  flex: 0 1 209px;
  gap: 3px;
  color: #444;
}

.tab.active {
  background: #fff;
}

.tab.last {
  border-right: 1px solid #bdbdbd;
}

.tab svg {
  width: 12px;
  height: 12px;
}

.tabs-fill {
  flex: 1;
  background: #e1e1e1;
}

.tabs-more {
  width: 35px;
  gap: 3px;
  background: #f6f6f6;
}

.tabs-more svg:first-child {
  width: 16px;
  height: 16px;
}

.canvas {
  position: relative;
  flex: 1;
  min-height: 0;
  background: #fff;
  overflow: hidden;
}

.model {
  width: 872px;
  height: 585px;
  stroke: none;
}

.model text {
  font-size: 7px;
  fill: #20304e;
  stroke: none;
}

.handle {
  position: absolute;
  width: 22px;
  height: 11px;
  left: calc(50% - 11px);
  padding: 5px 2px;
  border-radius: 2px;
  background: #efefef;
}

.handle::before {
  content: "";
  display: block;
  height: 1px;
  background: repeating-linear-gradient(90deg, #f2a45e 0 4px, transparent 4px 5px);
}

.handle-top { top: 1px; }
.handle-bottom { bottom: 0; }

.handle-left {
  left: 1px;
  top: calc(50% - 11px);
  width: 11px;
  height: 22px;
  padding: 2px 5px;
}

.handle-left::before {
  width: 1px;
  height: 18px;
  background: repeating-linear-gradient(#f2a45e 0 4px, transparent 4px 5px);
}

/* quick options */
.quick {
  display: flex;
  height: 15px;
  color: #222;
}

.quick-nav {
  display: flex;
  align-items: center;
  border-right: 1px solid #dcdcdc;
}

.quick-nav button {
  width: 16px;
}

.quick svg {
  width: 12px;
  height: 12px;
}

.quick svg.tiny {
  width: 8px;
  height: 8px;
}

.option {
  flex: 1;
  min-width: 0;
  padding: 0 1px 0 4px;
  border-right: 1px solid #dcdcdc;
}

.option:last-child {
  border-right: 0;
}

.option span {
  flex: 1;
  padding-left: 2px;
  text-align: center;
}

.option.off {
  color: #b4b4b4;
}

.option.off svg:not(.dark) {
  opacity: 0.5;
}

/* navigator */
.navigator {
  width: 228px;
  flex: none;
  display: flex;
  flex-direction: column;
  border-left: 1px solid #dedede;
  overflow: hidden;
}

.nav-icons {
  display: flex;
  align-items: center;
  gap: 1px;
  height: 22px;
  margin-top: 1px;
  padding-left: 2px;
}

.nav-icons button {
  width: 20px;
  height: 20px;
  border-radius: 3px;
}

.nav-icons .nav-menu {
  width: 24px;
  height: 16px;
  margin-left: auto;
  margin-right: -2px;
  background: #fff;
}

.nav-menu svg {
  width: 11px;
}

.search {
  display: flex;
  align-items: center;
  gap: 3px;
  height: 14px;
  margin: 3px 0 2px 2px;
  padding-left: 3px;
  background: #fff;
}

.search svg {
  width: 12px;
  height: 11px;
}

.search input {
  flex: 1;
  min-width: 0;
  outline: 0;
}

.search input::placeholder {
  color: #b2b2b2;
  opacity: 1;
}

.tree {
  flex: 1;
  min-height: 0;
  list-style: none;
  background: #fff;
  font-weight: 500;
}

.tree li {
  display: flex;
  align-items: center;
  gap: 2px;
  height: 17px;
  padding-left: 2px;
  white-space: nowrap;
}

.tree svg {
  width: 14px;
  height: 12px;
}

.tree svg.tiny {
  width: 8px;
}

.tree .child {
  padding-left: 22px;
}

.tree .selected {
  background: #dcdcdc;
}

.tree .deep {
  padding-left: 104px;
}

.hscroll {
  height: 10px;
  padding: 2px 17px 2px 0;
  background: #f8f8f8;
}

.hscroll div {
  height: 6px;
  border-radius: 3px;
  background: #bdbdbd;
}

.props {
  padding: 24px 0 0 2px;
}

.props h4 {
  height: 14px;
  margin-left: -2px;
  background: #d4d4d4;
}

.props-name {
  height: 12px;
  margin: 3px 0 2px;
  background: #fff;
}

.props p {
  display: flex;
  align-items: center;
  gap: 2px;
  height: 14px;
}

.props p svg {
  width: 11px;
  height: 11px;
}

.push {
  height: 15px;
  border-radius: 3px;
  background: #fff;
  box-shadow: 0 0 1px rgba(0, 0, 0, 0.3);
}

.props .push {
  width: 100%;
  margin: 2px 0;
}

.trace {
  padding: 3px 0 0 2px;
  color: #8a8a8a;
}

.trace svg {
  opacity: 0.5;
}

.trace label {
  display: block;
  padding-top: 1px;
  margin-bottom: 4px;
}

.trace-row {
  display: flex;
  align-items: center;
  gap: 2px;
  height: 19px;
  margin: 0 0 2px;
}

.chip {
  width: 20px;
  height: 19px;
  gap: 1px;
  flex: none;
  border-radius: 3px;
  background: #f8f8f8;
}

.trace-row .narrow {
  width: 9px;
  flex: none;
}

.trace-ref {
  flex: 1;
  height: 19px;
  padding-left: 2px;
  gap: 2px;
  border-radius: 3px;
  background: #f6f6f6;
  color: #ababab;
}

.trace-ref span {
  flex: 1;
  text-align: left;
}

.trace-icons {
  display: flex;
  gap: 8px;
  height: 26px;
  align-items: center;
  padding-left: 2px;
  margin-left: -2px;
  border-bottom: 1px solid var(--line);
  margin-bottom: 4px;
}

.trace-icons svg {
  width: 13px;
  height: 13px;
}

.trace-icons .first {
  margin: 0 21px 0 3px;
}

.trace-icons.lower {
  margin-top: 7px;
  margin-bottom: 0;
  padding-left: 27px;
  border-top: 1px solid var(--line);
  border-bottom: 0;
}

.swatch {
  width: 9px;
  height: 9px;
  background: #fb9088;
}

.swatch.wheel {
  border-radius: 50%;
  border: 1px solid #999;
  background: conic-gradient(#e88a84 0 33%, #8fa8e8 33% 66%, #8cc79a 66%);
}

.trace input[type=range] {
  appearance: none;
  flex: 1;
  min-width: 0;
  height: 11px;
  background:
    linear-gradient(#dadada, #dadada) 0 5px / 100% 1px no-repeat,
    repeating-linear-gradient(90deg, #dadada 0 1px, transparent 1px 19px) 0 3px / 100% 6px no-repeat;
  padding: 0;
}

.trace input[type=range]::-webkit-slider-thumb {
  appearance: none;
  width: 6px;
  height: 11px;
  border-radius: 3px;
  background: #f8f8f8;
  box-shadow: 0 0 1px rgba(0, 0, 0, 0.2);
}

/* status line */
.status {
  position: relative;
  display: flex;
  align-items: center;
  justify-content: space-between;
  height: 15px;
  padding: 0 5px 2px 1px;
  background: linear-gradient(#ececec, #d2d2d2);
  white-space: nowrap;
}

.brand {
  display: flex;
  align-items: center;
  gap: 3px;
  font-family: Lato, sans-serif;
  font-size: 10px;
  color: #666;
}

.brand b {
  font-weight: 400;
  color: #111;
}

.brand svg {
  width: 11px;
  height: 11px;
}

.brand .sep {
  height: 10px;
  border-color: #999;
}

/* dialog */
.dialog {
  position: absolute;
  top: 150px;
  right: 104px;
  width: 474px;
  border: 1px solid #c2c2c2;
  border-radius: 8px;
  background: var(--chrome);
  box-shadow: 0 12px 26px rgba(0, 0, 0, 0.45), 0 0 12px rgba(0, 0, 0, 0.15);
  overflow: hidden;
}

.dialog h2 {
  height: 20px;
  border-bottom: 2px solid #e4e2e1;
  background: #f7f4f3;
  font-size: 9px;
  font-weight: 600;
  line-height: 18px;
  text-align: center;
  color: #404040;
}

.dialog-body {
  display: flex;
  gap: 11px;
  padding: 9px 10px 6px;
}

.dialog-left {
  width: 230px;
  display: flex;
  flex-direction: column;
  justify-content: flex-end;
  padding-bottom: 1px;
}

.preview {
  width: 230px;
  height: 230px;
  border: 2px solid #9c9c9c;
  background: #fff;
  stroke: #111;
}

.preview text {
  font-size: 7px;
  fill: #111;
  stroke: none;
}

.pair {
  display: flex;
  gap: 8px;
  margin-top: 8px;
}

.pair .push {
  flex: 1;
}

.dialog-right {
  flex: 1;
  min-width: 0;
}

.dialog-right > .push {
  width: 100%;
}

.dialog hr {
  border: 0;
  border-top: 1px solid var(--line);
  margin: 6px 0;
}

.axo-type {
  display: flex;
  gap: 7px;
  line-height: 10px;
}

.axo-btn {
  width: 34px;
  height: 30px;
  border-radius: 3px;
  background: #fff;
}

.axo-btn svg:first-child {
  width: 24px;
  height: 26px;
}

.axo-grid {
  display: flex;
  gap: 3px;
  margin-top: 10px;
  align-items: flex-end;
}

.compass {
  width: 77px;
  height: 77px;
  border: 2px solid #9c9c9c;
  background: #fff;
  stroke: #9a9a9a;
}

.angles {
  flex: 1;
  border-collapse: collapse;
  margin-bottom: 28px;
  table-layout: fixed;
}

.angles th {
  padding: 0;
  text-align: left;
  font-weight: 400;
  height: 10px;
}

.angles tbody th {
  height: 17px;
}

.angles th:first-child {
  width: 14px;
}

.angles th:nth-child(2) {
  width: 56px;
}

.angles td {
  padding: 0;
}

.angles td:nth-child(2) {
  padding-right: 8px;
}

.dialog input:not([type=radio]) {
  display: block;
  width: 100%;
  height: 12px;
  padding: 0 2px;
  background: #fff;
  box-shadow: 0 1px 1px rgba(0, 0, 0, 0.12);
}

.field-row,
.sun-fields {
  display: flex;
  justify-content: flex-end;
  align-items: flex-end;
}

.view-dir {
  margin-top: -15px;
  margin-bottom: 8px;
}

.field {
  width: 62px;
}

.field label {
  display: block;
  margin-bottom: 2px;
}

.angle-icon {
  width: 24px;
  height: 22px;
  margin-right: 6px;
}

.sun-fields {
  justify-content: space-between;
  margin-bottom: 9px;
}

.sun-fields .angle-icon {
  margin: 0 0 2px;
}

.sun-fields .field:nth-child(2) {
  margin-right: 8px;
}

.sun-fields label {
  margin-bottom: 6px;
}

.angle-icon text {
  font-size: 9px;
  fill: var(--ink);
  stroke: none;
}

#dir {
  outline: 2px solid #7fa6f0;
  caret-color: transparent;
}

#dir::selection {
  background: #b3d5fd;
  color: var(--text);
}

.radios {
  display: grid;
  grid-template-columns: 114px 1fr;
  margin: 7px 0;
}

.radios label {
  display: flex;
  align-items: center;
  gap: 4px;
  font-weight: 500;
}

.radios input {
  appearance: none;
  width: 10px;
  height: 10px;
  border-radius: 50%;
  background: #fff;
  box-shadow: 0 0 1px rgba(0, 0, 0, 0.4);
}

.radios input:checked {
  border: 3px solid #0a7aff;
}

.dialog-actions {
  display: flex;
  justify-content: flex-end;
  gap: 8px;
  margin-top: 8px;
}

.dialog-actions .push {
  width: 62px;
}

.push.primary {
  background: linear-gradient(#2d90ff, #0672f5);
  color: #fff;
  font-weight: 600;
}
```
FILE: script.js
```js
const NS = 'http://www.w3.org/2000/svg';
const model = document.getElementById('model');
const SLOPE = 0.577;

function add(parent, tag, attrs) {
  const el = document.createElementNS(NS, tag);
  for (const k in attrs) el.setAttribute(k, attrs[k]);
  parent.appendChild(el);
  return el;
}

function rect(g, x, y, w, h, fill) {
  add(g, 'rect', { x, y, width: w, height: h, fill });
}

// curtain wall: drawn flat, then sheared to the 30 degree axonometry
function drawFacade() {
  const bays = 16;
  const pitch = 23.15;
  const g = add(model, 'g', { transform: `matrix(1 ${SLOPE} 0 1 217.500 0)` });

  rect(g, -1, 103, 373, 216, '#48484c');
  for (let i = 0; i < bays; i++) {
    const x = i * pitch;
    rect(g, x + 1, 107, 21, 208, '#77777b');
    rect(g, x + 2.3, 108, 19, 207, '#a4a4a8');
    rect(g, x + 3.2, 108, 17.500, 206, '#ebebeb');
    const rails = i % 2 ? [134.500, 206, 277.700] : [170.500, 242];
    rails.concat(311).forEach(y => {
      rect(g, x + 1.5, y - 1, 19.500, 1, '#66666a');
      rect(g, x + 1.5, y, 19.500, 4, '#939397');
      rect(g, x + 1.5, y + 4, 19.500, 3.500, '#48484c');
      if (y < 300) rect(g, x + 2, y + 5.500, 18, 0.700, '#8a8a8e');
    });
  }
  // top and right edge
  rect(g, 1, 99.500, 371, 7.500, '#3a3a3e');
  rect(g, 1, 100.300, 370.500, 5.200, '#7c7c81');
  rect(g, 368.500, 105, 3.500, 210, '#5c5c62');
  add(model, 'path', { d: 'M216.500 104l2.500-5 1 3-2 5z', fill: '#3a3a3e' });
}

function drawAxes() {
  add(model, 'path', { d: 'M219 316l18-34M221 316l17-32M219 316l36 18', fill: 'none', stroke: '#a9b6d2' });
  add(model, 'path', { d: 'M218.500 316v-36', fill: 'none', stroke: '#8a9cc4' });
  [['z', 219, 276], ['y', 238, 282], ['x', 253, 335]].forEach(([t, x, y]) => {
    add(model, 'text', { x, y }).textContent = t;
  });
}

function drawRailing() {
  const x0 = 182.500, y0 = 342, span = 30.900;
  const shades = ['#1e2424', '#7d8383', '#3a4141', '#a5aaaa'];
  for (let i = 0; i < 120; i++) {
    const x = x0 + i * span / 10;
    const y = y0 + (x - x0) * SLOPE;
    if (i % 10) {
      add(model, 'path', { d: `M${x} ${y}v31`, stroke: shades[(i * 3) % 4], 'stroke-width': 1 });
    }
  }
  for (let i = 0; i <= 12; i++) {
    const x = x0 + i * span;
    const y = y0 + (x - x0) * SLOPE;
    add(model, 'path', { d: `M${x} ${y}v34.500`, stroke: '#2e3636', 'stroke-width': 1.800 });
  }
  add(model, 'path', { d: 'M183 373L553 586.500', stroke: '#4a5252', 'stroke-width': 1 });
  add(model, 'path', { d: 'M178 339L558.500 558.500', stroke: '#4c4438', 'stroke-width': 2.500 });
  add(model, 'path', { d: 'M178 338.500L558.500 558', stroke: '#9a8a74', 'stroke-width': 1.200 });
}

drawFacade();
drawAxes();
drawRailing();

// the view direction is ready to be overtyped
const dir = document.getElementById('dir');
dir.focus();
dir.select();
```
